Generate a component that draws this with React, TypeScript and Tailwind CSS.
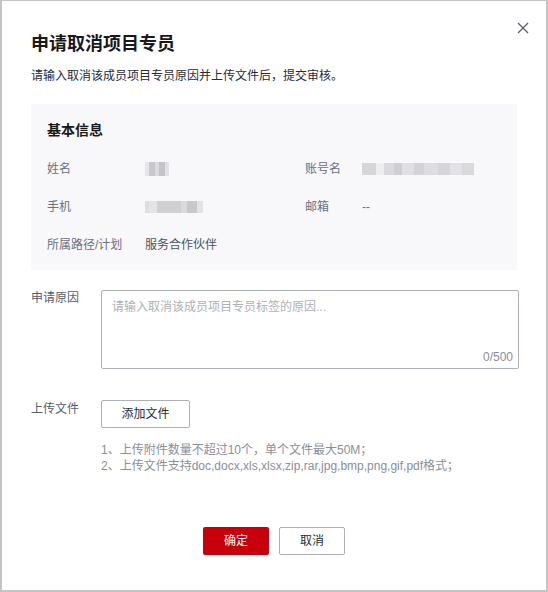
import React from 'react'

const font = { fontFamily: '"Liberation Sans", "Noto Sans CJK SC", sans-serif' }

// blurred (mosaic) placeholder for masked personal data
function Mosaic({ cells, h }: { cells: [number, string][]; h: string }) {
  return (
    <div className={`flex ${h}`}>
      {cells.map(([w, c], i) => (
        <div key={i} style={{ width: w, background: c }} className="h-full" />
      ))}
    </div>
  )
}

function InfoRow({
  label,
  value,
  label2,
  value2,
}: {
  label: string
  value: React.ReactNode
  label2?: string
  value2?: React.ReactNode
}) {
  return (
    <div className="flex items-center h-[18px] text-[12px] leading-[18px]">
      <div className="w-[98px] text-[#6b707d]">{label}</div>
      <div className="w-[160px] text-[#4d5262]">{value}</div>
      {label2 && <div className="w-[57px] text-[#6b707d]">{label2}</div>}
      {label2 && <div className="text-[#6b707d]">{value2}</div>}
    </div>
  )
}

export default function App() {
  return (
    <div
      style={font}
      className="relative w-[548px] h-[592px] bg-white border-t border-l-2 border-r-2 border-b-2 border-[#c4c4c4] box-border"
    >
      <button className="absolute top-[19px] right-[16px] w-[15px] h-[15px] flex items-center justify-center text-[#575d6c]">
        <svg width="12" height="12" viewBox="0 0 12 12" fill="none" stroke="currentColor" strokeWidth="1.3">
          <path d="M1 1L11 11M11 1L1 11" />
        </svg>
      </button>

      <div className="pl-[29px] pt-[30px]">
        <h2 className="text-[18px] leading-[26px] font-bold text-[#191919]">申请取消项目专员</h2>
        <p className="mt-[10px] text-[12px] leading-[18px] text-[#252b3a]">
          请输入取消该成员项目专员原因并上传文件后，提交审核。
        </p>

        <div className="mt-[19px] w-[486px] bg-[#f8f8fa] pl-[16px] pt-[16px] pb-[16px] flex flex-col gap-y-[20px]">
          <div className="text-[14px] leading-[20px] font-bold text-[#191919]">基本信息</div>
          <InfoRow
            label="姓名"
            value={
              <Mosaic
                h="h-[14px]"
                cells={[
                  [4, '#e6e6ea'],
                  [6, '#c9c9cd'],
                  [4, '#dcdce0'],
                  [6, '#c4c4c8'],
                  [4, '#e2e2e6'],
                ]}
              />
            }
            label2="账号名"
            value2={
              <Mosaic
                h="h-[12px]"
                cells={[
                  [14, '#d6d6da'],
                  [8, '#eeeef1'],
                  [10, '#dadade'],
                  [8, '#cfcfd3'],
                  [12, '#e0e0e4'],
                  [10, '#d3d3d7'],
                  [14, '#dedee2'],
                  [12, '#d6d6da'],
                  [12, '#e3e3e7'],
                  [12, '#d9d9dd'],
                ]}
              />
            }
          />
          <InfoRow
            label="手机"
            value={
              <Mosaic
                h="h-[12px]"
                cells={[
                  [4, '#dedee2'],
                  [8, '#e4e4e8'],
                  [24, '#d0d0d4'],
                  [6, '#dadade'],
                  [10, '#c8c8cc'],
                  [6, '#e2e2e6'],
                ]}
              />
            }
            label2="邮箱"
            value2="--"
          />
          <InfoRow label="所属路径/计划" value="服务合作伙伴" />
        </div>

        <div className="mt-[20px] flex">
          <div className="w-[70px] pt-[1px] text-[12px] leading-[14px] text-[#575d6c]">申请原因</div>
          <div className="relative w-[418px] h-[79px] border border-[#adb0b8] rounded-[2px] bg-white">
            <div className="pl-[10px] pt-[7px] text-[12px] leading-[18px] text-[#adb0b8]">
              请输入取消该成员项目专员标签的原因...
            </div>
            <div className="absolute right-[5px] bottom-[2px] text-[12px] leading-[18px] text-[#8a8e99]">0/500</div>
          </div>
        </div>

        <div className="mt-[31px] flex">
          <div className="w-[70px] pt-[1px] text-[12px] leading-[16px] text-[#575d6c]">上传文件</div>
          <div>
            <button className="w-[89px] h-[28px] border border-[#adb0b8] rounded-[2px] text-[12px] text-[#252b3a] bg-white">
              添加文件
            </button>
            <div className="mt-[14px] text-[12px] leading-[16px] text-[#8a8e99]">
              <div>1、上传附件数量不超过10个，单个文件最大50M；</div>
              <div>2、上传文件支持doc,docx,xls,xlsx,zip,rar,jpg,bmp,png,gif,pdf格式；</div>
            </div>
          </div>
        </div>
      </div>

      <div className="mt-[53px] flex justify-center gap-[10px]">
        <button className="w-[66px] h-[28px] rounded-[2px] bg-[#c7000b] text-white text-[12px]">确定</button>
        <button className="w-[66px] h-[28px] rounded-[2px] border border-[#adb0b8] bg-white text-[#252b3a] text-[12px]">
          取消
        </button>
      </div>
    </div>
  )
}
